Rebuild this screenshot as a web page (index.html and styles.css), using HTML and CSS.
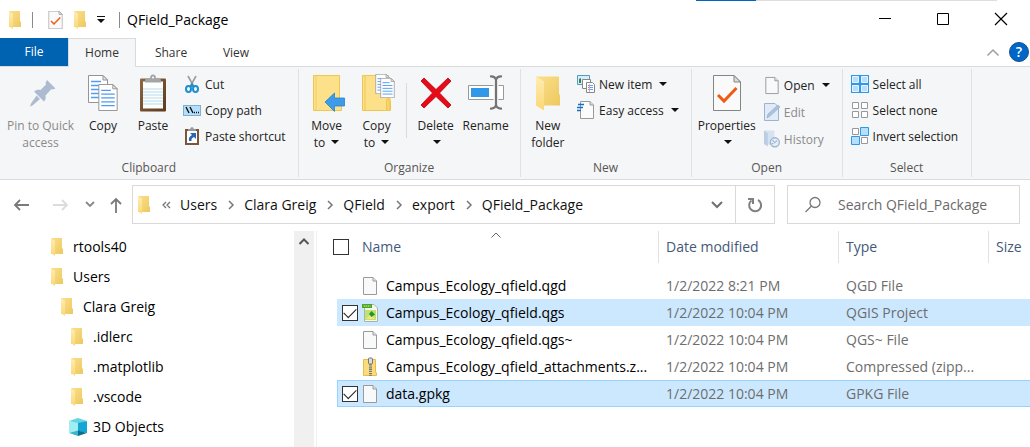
FILE: index.html
```html
<!DOCTYPE html>
<html lang="en">
<head>
<meta charset="utf-8">
<title>QField_Package</title>
<link rel="stylesheet" href="styles.css">
</head>
<body>
<svg class="defs" aria-hidden="true">
  <defs>
    <linearGradient id="fold" x1="0" y1="0" x2="1" y2="1"><stop offset="0" stop-color="#fae08d"/><stop offset="1" stop-color="#eec85e"/></linearGradient>
    <linearGradient id="flap" x1="0" y1="0" x2="0" y2="1"><stop offset="0" stop-color="#ffedb3"/><stop offset="1" stop-color="#fbd775"/></linearGradient>
    <linearGradient id="wood" x1="0" y1="0" x2="1" y2="1"><stop offset="0" stop-color="#8e6845"/><stop offset="1" stop-color="#5c3a1c"/></linearGradient>
    <symbol id="folder" viewBox="0 0 12 18"><path d="M0 0H11V10L12 11V16H0Z" fill="url(#fold)"/><path d="M0 0L4 3V18L0 15Z" fill="url(#flap)"/></symbol>
    <symbol id="file" viewBox="0 0 16 20"><path d="M1.500 1.500H11L14.500 5V18.500H1.500Z" fill="#f8f9f9" stroke="#9a9a9a"/><path d="M11 1.500V5H14.500" fill="#e4e4e4" stroke="#9a9a9a"/></symbol>
    <symbol id="sheet" viewBox="0 0 20 28"><path d="M.5.5H15L19.500 5V27.500H.5Z" fill="#fff" stroke="#949494"/><path d="M15 .5V5H19.500Z" fill="#e8e8e8" stroke="#949494"/><path d="M3 6.500H13M3 10.500H17M3 14.500H17M3 18.500H17M3 22.500H17" stroke="#4f9bf5" stroke-width="1.300"/></symbol>
    <symbol id="checked" viewBox="0 0 28 36"><path d="M.5.5H21L27.500 7V35.500H.5Z" fill="#fafafa" stroke="#858585"/><path d="M21 .5V7H27.500Z" fill="#ddd" stroke="#858585"/><path d="M5 20L11 26L23.500 13" fill="none" stroke="#f05a14" stroke-width="3"/></symbol>
    <symbol id="chev" viewBox="0 0 8 10"><path d="M2 1L6 5L2 9" fill="none" stroke="#777" stroke-width="1.500"/></symbol>
  </defs>
</svg>

<header class="titlebar">
  <div class="accent"></div>
  <div class="quick">
    <svg class="i-folder"><use href="#folder"/></svg>
    <span class="bar first"></span>
    <button aria-label="Properties"><svg width="15" height="18"><use href="#checked"/></svg></button>
    <button aria-label="New folder"><svg class="i-folder"><use href="#folder"/></svg></button>
    <button aria-label="Customize toolbar"><svg width="8" height="8" viewBox="0 0 8 8"><path d="M0 .5H8" stroke="#111"/><path d="M0 3H8L4 7Z" fill="#111"/></svg></button>
    <span class="bar last"></span>
    <h1>QField_Package</h1>
  </div>
  <div class="winctl">
    <button aria-label="Minimize"><svg width="14" height="14"><path d="M1 6.500H13" stroke="#000"/></svg></button>
    <button aria-label="Maximize"><svg width="14" height="14"><path d="M1.500 1.500H12.500V12.500H1.500Z" fill="none" stroke="#000"/></svg></button>
    <button aria-label="Close"><svg width="14" height="14"><path d="M1 1L13 13M13 1L1 13" stroke="#000" stroke-width="1.200"/></svg></button>
  </div>
</header>

<nav class="tabs">
  <button class="tab file">File</button>
  <button class="tab active">Home</button>
  <button class="tab share">Share</button>
  <button class="tab view">View</button>
  <div class="tabs-end">
    <button aria-label="Collapse ribbon"><svg width="14" height="9"><path d="M1.500 7.500L7 2L12.500 7.500" fill="none" stroke="#a0a0a0" stroke-width="1.500"/></svg></button>
    <button class="help" aria-label="Help">?</button>
  </div>
</nav>

<section class="ribbon">
  <div class="group">
    <div class="tools">
      <button class="big wide off"><svg width="36" height="36" viewBox="0 0 36 36"><g fill="#adbbd1"><path d="M24 5L32.500 13.500L29.500 14.500L28.500 14L22.500 20.500C23 23 22.500 25 21 26.500L11 16.500C13 15 15 14.500 17.500 15L23 9.500L22.500 8Z"/><path d="M13.500 20.500L17 24L9.500 30.500L7 31.500L8 28.500Z"/></g></svg><span>Pin to Quick<br>access</span></button>
      <button class="big"><svg width="32" height="36" viewBox="0 0 32 36"><use href="#sheet" x="1" y="0" width="20" height="28"/><use href="#sheet" x="11" y="9" width="20" height="27"/></svg><span>Copy</span></button>
      <button class="big"><svg width="28" height="37" viewBox="0 0 28 37"><rect x="1" y="4" width="26" height="33" rx="1" fill="url(#wood)"/><rect x="4" y="7" width="20" height="27" fill="#fdfefe"/><path d="M4 14.500H24M4 17.500H24M4 20.500H24M4 23.500H24M4 26.500H24M4 29.500H24" stroke="#b6dcf0"/><path d="M6 8V6Q6 4 9 4H11Q11 0 14 0Q17 0 17 4H19Q22 4 22 6V8Z" fill="#a3a5a8"/><circle cx="14" cy="3" r="1" fill="#fff"/></svg><span>Paste</span></button>
      <div class="stack">
        <button class="small"><svg width="18" height="18" viewBox="0 0 18 18"><path d="M5 1L10.500 11M13 1L7.500 11" stroke="#9a9ea3" stroke-width="1.600"/><g fill="none" stroke="#1c8fd1" stroke-width="2"><ellipse cx="5.500" cy="14" rx="2.500" ry="3"/><ellipse cx="12.500" cy="14" rx="2.500" ry="3"/><path d="M7.500 12L9 9.500L10.500 12"/></g></svg>Cut</button>
        <button class="small"><svg width="18" height="18" viewBox="0 0 18 18"><rect x=".5" y="4.500" width="17" height="10" fill="#b5defb" stroke="#7cb0d5"/><path d="M3 6L6 12M7 6L10 12" stroke="#111" stroke-width="1.400"/><path d="M11 11.500H12M13 11.500H14M15 11.500H16" stroke="#111" stroke-width="1.300"/></svg>Copy path</button>
        <button class="small"><svg width="18" height="20" viewBox="0 0 18 20"><rect x="2" y="3" width="14" height="16" fill="#7a5737"/><rect x="4" y="5" width="10" height="12" fill="#fff"/><path d="M5 5V3H7Q9-1 11 3H13V5Z" fill="#999"/><path d="M7 7H13V13L11 11Q8 12 8.500 15H6Q5 11 9 9Z" fill="#2668b5"/></svg>Paste shortcut</button>
      </div>
    </div>
    <div class="caption">Clipboard</div>
  </div>
  <div class="group organize">
    <div class="tools">
      <button class="big"><svg width="36" height="38" viewBox="0 0 36 38"><path d="M4.500 1.500H30.500V30L32.500 33V36.500H4.500Z" fill="#fde08a" stroke="#edc751"/><path d="M7 2V36" stroke="#edc751" stroke-width=".7"/><path d="M16 28L25.500 19V24H35.500V32H25.500V37.500Z" fill="#3d9be8" stroke="#2684cf" stroke-width=".8"/></svg><span>Move<br>to <i class="caret"></i></span></button>
      <button class="big"><svg width="36" height="38" viewBox="0 0 36 38"><path d="M3.500 1.500H29.500V23Q32 23 31.500 36.500H3.500Z" fill="#fde08a" stroke="#edc751"/><path d="M6 2V36M27.500 36V26Q29 22 31 26V36" fill="#fbd266" stroke="#edc751"/><use href="#sheet" x="16" y="0" width="15" height="20"/><use href="#sheet" x="21" y="4" width="15" height="20"/></svg><span>Copy<br>to <i class="caret"></i></span></button>
      <span class="divider"></span>
      <button class="big"><svg width="34" height="36" viewBox="0 0 34 36"><path d="M5 3L17 14.500L29 3L32 6L20.500 18L32 30L29 33L17 21.500L5 33L2 30L13.500 18L2 6Z" fill="#e60b17" stroke="#b8000c" stroke-width=".8"/></svg><span>Delete<br><i class="caret"></i></span></button>
      <button class="big"><svg width="38" height="36" viewBox="0 0 38 36"><path d="M1.500 10.500H36.500V24.500H1.500Z" fill="#fff" stroke="#999"/><rect x="4" y="13" width="18" height="9" fill="#3198e8"/><path d="M29 4V31" stroke="#f5f6f7" stroke-width="5"/><path d="M29 4V31M23 1.500Q28 1 29 5Q30 1 35 1.500M23 33.500Q28 34 29 30Q30 34 35 33.500" fill="none" stroke="#747474" stroke-width="2.200"/></svg><span>Rename</span></button>
    </div>
    <div class="caption">Organize</div>
  </div>
  <div class="group new">
    <div class="tools">
      <button class="big"><svg width="24" height="35" viewBox="0 0 24 35"><path d="M0 1H23V18L24 20V30H0Z" fill="url(#fold)"/><path d="M0 1L8 6V35L0 30Z" fill="url(#flap)"/></svg><span>New<br>folder</span></button>
      <div class="stack">
        <button class="small"><svg width="18" height="18" viewBox="0 0 18 18"><path d="M.5.5H12.500V9.500H.5Z" fill="#d6edfa" stroke="#579abf"/><path d="M2 8V4L4 3V8Z" fill="#368052"/><path d="M5.500 4.500H13.500V13.500H5.500Z" fill="#fff" stroke="#888"/><path d="M9.500 7.500H15.500L17.500 9.500V17.500H9.500Z" fill="#fff" stroke="#888"/><path d="M11 10.500H16M11 12.500H16M11 14.500H16" stroke="#5ca2f5"/><path d="M12.500 9V17" stroke="#f39a9a"/></svg>New item <i class="caret"></i></button>
        <button class="small"><svg width="18" height="18" viewBox="0 0 18 18"><path d="M3.500.5H13L16.500 4V17.500H3.500Z" fill="#fcfcfc" stroke="#999"/><path d="M13 .5V4H16.500" fill="#ddd" stroke="#999"/><path d="M1 3.500H7M0 6.500H6M0 9.500H4" stroke="#1670c0" stroke-width="1.500"/></svg>Easy access <i class="caret"></i></button>
      </div>
    </div>
    <div class="caption">New</div>
  </div>
  <div class="group open">
    <div class="tools">
      <button class="big prop"><svg width="28" height="36"><use href="#checked"/></svg><span>Properties<br><i class="caret"></i></span></button>
      <div class="stack">
        <button class="small"><svg width="16" height="19"><use href="#file"/></svg>Open <i class="caret"></i></button>
        <button class="small off"><svg width="16" height="18" viewBox="0 0 16 18"><path d="M.5.5H11L14.500 4V17.500H.5Z" fill="#dfebf7" stroke="#9db3cf"/><path d="M3 15L4 11L14 2L16 4L6 13Z" fill="#adc2dc" stroke="#8ea8c8" stroke-width=".6"/></svg>Edit</button>
        <button class="small off"><svg width="16" height="18" viewBox="0 0 17 18"><path d="M0 0H11V15H0Z" fill="#d5e2f0"/><path d="M0 0L4 3V17L0 14Z" fill="#bccde1"/><circle cx="11.500" cy="12.500" r="4.800" fill="#e5edf7" stroke="#9db4d0" stroke-width="1.400"/><path d="M9 10L11.500 13L14 10.500M8 14H10" stroke="#7f9bbd" fill="none"/></svg>History</button>
      </div>
    </div>
    <div class="caption">Open</div>
  </div>
  <div class="group select">
    <div class="tools">
      <div class="stack">
        <button class="small"><svg width="18" height="18" viewBox="0 0 18 18"><rect width="18" height="18" fill="#3297e8"/><path d="M1.500 1.500H7.500V7.500H1.500ZM10.500 1.500H16.500V7.500H10.500ZM1.500 10.500H7.500V16.500H1.500ZM10.500 10.500H16.500V16.500H10.500Z" fill="#b6dffc" stroke="#e7f5ff"/></svg>Select all</button>
        <button class="small"><svg width="18" height="18" viewBox="0 0 18 18"><path d="M1.500 1.500H7.500V7.500H1.500ZM10.500 1.500H16.500V7.500H10.500ZM1.500 10.500H7.500V16.500H1.500ZM10.500 10.500H16.500V16.500H10.500Z" fill="#fff" stroke="#999"/></svg>Select none</button>
        <button class="small"><svg width="18" height="18" viewBox="0 0 18 18"><path d="M1.500 1.500H7.500V7.500H1.500ZM10.500 10.500H16.500V16.500H10.500Z" fill="#fff" stroke="#999"/><path d="M9.500.5H17.500V8.500H9.500ZM.5 9.500H8.500V17.500H.5Z" fill="#b6dffc" stroke="#3297e8"/></svg>Invert selection</button>
      </div>
    </div>
    <div class="caption">Select</div>
  </div>
</section>

<div class="address">
  <div class="history">
    <button aria-label="Back"><svg width="18" height="14"><path d="M8 2L3 7L8 12M3 7H17" fill="none" stroke="#7a7a7a" stroke-width="1.800"/></svg></button>
    <button aria-label="Forward"><svg width="18" height="14"><path d="M10 2L15 7L10 12M1 7H15" fill="none" stroke="#dcdcdc" stroke-width="1.800"/></svg></button>
    <button aria-label="Recent locations"><svg width="10" height="7"><path d="M1 1L5 5L9 1" fill="none" stroke="#888" stroke-width="1.800"/></svg></button>
    <button aria-label="Up"><svg width="12" height="18"><path d="M1 8L6 3L11 8M6 3V17" fill="none" stroke="#7a7a7a" stroke-width="1.800"/></svg></button>
  </div>
  <div class="path">
    <svg class="i-folder"><use href="#folder"/></svg>
    <svg class="more" width="9" height="8"><path d="M4 1L1 4L4 7M8 1L5 4L8 7" fill="none" stroke="#777" stroke-width="1.300"/></svg>
    <button>Users</button><svg class="sep"><use href="#chev"/></svg>
    <button>Clara Greig</button><svg class="sep"><use href="#chev"/></svg>
    <button>QField</button><svg class="sep"><use href="#chev"/></svg>
    <button>export</button><svg class="sep"><use href="#chev"/></svg>
    <button>QField_Package</button>
    <button class="drop" aria-label="Previous locations"><svg width="12" height="8"><path d="M1 1L6 6L11 1" fill="none" stroke="#707070" stroke-width="2"/></svg></button>
    <button class="refresh" aria-label="Refresh"><svg width="16" height="18"><path d="M11 4A6 6 0 1 1 4.500 4.500" fill="none" stroke="#808080" stroke-width="2"/><path d="M1 3H6V8" fill="none" stroke="#808080" stroke-width="2"/></svg></button>
  </div>
  <label class="search">
    <svg width="18" height="18"><circle cx="11" cy="6.500" r="5" fill="none" stroke="#777" stroke-width="1.300"/><path d="M7.500 10L1.500 16" stroke="#777" stroke-width="1.300"/></svg>
    <input type="text" placeholder="Search QField_Package" aria-label="Search QField_Package">
  </label>
</div>

<main class="content">
  <nav class="tree">
    <a href="#" class="l1"><svg class="i-folder"><use href="#folder"/></svg>rtools40</a>
    <a href="#" class="l1"><svg class="i-folder"><use href="#folder"/></svg>Users</a>
    <a href="#" class="l2"><svg class="i-folder"><use href="#folder"/></svg>Clara Greig</a>
    <a href="#" class="l3"><svg class="i-folder"><use href="#folder"/></svg>.idlerc</a>
    <a href="#" class="l3"><svg class="i-folder"><use href="#folder"/></svg>.matplotlib</a>
    <a href="#" class="l3"><svg class="i-folder"><use href="#folder"/></svg>.vscode</a>
    <a href="#" class="cube"><svg width="18" height="18" viewBox="0 0 18 18"><path d="M0 3L9 0L18 3L9 6Z" fill="#62d4e2"/><path d="M0 3L9 5V13L0 15Z" fill="#a0eef1"/><path d="M18 3L9 5V13L18 15Z" fill="#14a5d5"/><path d="M0 15L9 12.500V18Z" fill="#35b9ca"/><path d="M18 15L9 12.500V18Z" fill="#08718b"/></svg>3D Objects</a>
  </nav>
  <div class="scroll"><button aria-label="Scroll up"><svg width="12" height="9"><path d="M1.500 7L6 2.500L10.500 7" fill="none" stroke="#555" stroke-width="2"/></svg></button></div>
  <div class="files">
    <svg class="sort" width="10" height="6"><path d="M.5 5.500L5 1L9.500 5.500" fill="none" stroke="#666"/></svg>
    <table>
      <colgroup><col class="c-check"><col class="c-name"><col class="c-date"><col class="c-type"><col></colgroup>
      <thead><tr><th class="check"><input type="checkbox" aria-label="Select all items"></th><th class="name">Name</th><th>Date modified</th><th>Type</th><th class="size">Size</th></tr></thead>
      <tbody>
        <tr><td class="check"></td><td class="name"><span><svg class="i-file"><use href="#file"/></svg>Campus_Ecology_qfield.qgd</span></td><td>1/2/2022 8:21 PM</td><td>QGD File</td><td></td></tr>
        <tr class="sel"><td class="check"><input type="checkbox" checked aria-label="Campus_Ecology_qfield.qgs"></td><td class="name"><span><svg class="i-file" viewBox="0 0 16 20"><path d="M2.500 1.500H12L15.500 5V18.500H2.500Z" fill="#f4f8ea" stroke="#a8b5a8"/><path d="M0 1H10V5H0Z" fill="#4ca523"/><path d="M1.500 3H8.500" stroke="#d8efb8" stroke-dasharray="1.500 .6"/><path d="M3 7H14V17H3Z" fill="#c0e174"/><path d="M4 16L9 11L13 16Z" fill="#f1e879"/><path d="M9.500 8L13 11.500L9.500 14L7 11Z" fill="#24942e"/></svg>Campus_Ecology_qfield.qgs</span></td><td>1/2/2022 10:04 PM</td><td>QGIS Project</td><td></td></tr>
        <tr><td class="check"></td><td class="name"><span><svg class="i-file"><use href="#file"/></svg>Campus_Ecology_qfield.qgs~</span></td><td>1/2/2022 10:04 PM</td><td>QGS~ File</td><td></td></tr>
        <tr><td class="check"></td><td class="name"><span><svg class="i-file" viewBox="0 0 16 20"><path d="M1.500 2.500H13.500V15L14.500 16V18.500H1.500Z" fill="#fbdc7d" stroke="#e6bd48"/><path d="M8.500 5V19" stroke="#777" stroke-width="3" stroke-dasharray="1.300 .9"/><rect x="6.500" y="1" width="4" height="6" rx="1" fill="#ddd" stroke="#777"/></svg>Campus_Ecology_qfield_attachments.z...</span></td><td>1/2/2022 10:04 PM</td><td>Compressed (zipp...</td><td></td></tr>
        <tr class="sel focus"><td class="check"><input type="checkbox" checked aria-label="data.gpkg"></td><td class="name"><span><svg class="i-file"><use href="#file"/></svg>data.gpkg</span></td><td>1/2/2022 10:04 PM</td><td>GPKG File</td><td></td></tr>
      </tbody>
    </table>
  </div>
</main>
</body>
</html>
```
FILE: styles.css
```css
* { box-sizing: border-box; }
html, body { height: 100%; }
body { margin: 0; display: flex; flex-direction: column; overflow: hidden; background: #fff; color: #000; font: 14px/20px "Open Sans", "Noto Sans", sans-serif; }
button { display: flex; align-items: center; border: 0; padding: 0; background: none; color: inherit; font: inherit; white-space: nowrap; }
svg { flex: none; display: block; }
.defs { position: absolute; width: 0; height: 0; }
.i-folder { width: 12px; height: 18px; }

.titlebar { position: relative; display: flex; justify-content: space-between; height: 38px; flex: none; }
.accent { position: absolute; top: 0; right: 33px; width: 301px; height: 1px; background: linear-gradient(90deg, #0067c0 60px, #dedede 60px); }
.quick { display: flex; align-items: center; gap: 11px; padding: 2px 0 0 9px; }
.quick h1 { margin: 0 0 0 -4px; font-size: 14px; font-weight: 400; }
.bar { width: 1px; height: 16px; background: #8a8a8a; }
.bar.first { margin-right: 4px; }
.bar.last { margin-left: 3px; }
.winctl { display: flex; }
.winctl button { width: 58px; justify-content: center; }

.tabs { display: flex; height: 29px; flex: none; border-bottom: 1px solid #dadbdc; font-size: 12px; color: #333; }
.tab { justify-content: center; height: 29px; width: 68px; }
.tab.file { height: 28px; background: #0063b1; color: #fff; }
.tab.active { background: #f5f6f7; border: 1px solid #dadbdc; border-bottom: 0; }
.tab.share { width: 70px; }
.tab.view { width: 60px; }
.tabs-end { display: flex; align-items: center; gap: 9px; margin-left: auto; padding-right: 1px; }
.help { width: 20px; height: 20px; justify-content: center; border-radius: 50%; background: #0067c8; border: 1px solid #1d4e89; color: #fff; font-size: 14px; font-weight: 600; }

.ribbon { display: flex; flex: none; padding: 2px 0; background: #f5f6f7; border-bottom: 1px solid #dadbdc; font-size: 12px; line-height: 17px; color: #222; }
.group { display: flex; flex-direction: column; flex: none; border-right: 1px solid #e0e1e2; padding: 0 3px; }
.tools { display: flex; height: 90px; padding-top: 4px; }
.caption { text-align: center; height: 18px; line-height: 18px; color: #555; }
.big { flex-direction: column; justify-content: flex-start; gap: 5px; width: 50px; padding-top: 1px; }
.big svg { height: 38px; }
.big.wide { width: 75px; }
.stack { display: flex; flex-direction: column; padding: 0 9px 0 5px; }
.small { height: 26px; gap: 4px; padding-bottom: 4px; }
.off { color: #8a8a8a; }
.caret { display: inline-block; border: 4px solid transparent; border-top-color: #111; border-bottom: 0; margin-left: 3px; vertical-align: 3px; }
.divider { width: 1px; height: 55px; margin: 10px 4px 0; background: #dadbdc; }
.organize { width: 222px; }
.new { width: 171px; }
.open { width: 151px; }
.open .small { height: 27px; padding-bottom: 3px; }
.select { width: 129px; }
.prop { width: 70px; }

.address { display: flex; flex: none; height: 51px; padding: 5px 10px 7px 12px; gap: 12px; color: #111; }
.history { display: flex; align-items: center; gap: 15px; width: 108px; }
.history button:first-child { margin-right: 7px; }
.path { display: flex; flex: 1; align-items: center; border: 1px solid #d9d9d9; padding-left: 5px; }
.path .more { margin: 0 9px 0 12px; }
.path .sep { width: 8px; height: 10px; margin: 0 9px 0 10px; }
.path .drop { margin-left: auto; padding: 0 12px; }
.refresh { width: 39px; height: 100%; justify-content: center; border-left: 1px solid #d9d9d9; }
.search { display: flex; align-items: center; width: 233px; border: 1px solid #d9d9d9; padding-left: 16px; gap: 16px; }
.search input { flex: 1; min-width: 0; border: 0; padding: 0; outline: 0; background: none; font: inherit; }
.search input::placeholder { color: #6b6b6b; opacity: 1; }

.content { display: flex; flex: 1; min-height: 0; }
.tree { display: flex; flex-direction: column; width: 294px; padding-top: 1px; overflow: hidden; }
.tree a { display: flex; flex: none; align-items: center; gap: 10px; height: 30px; color: #000; text-decoration: none; }
.l1 { padding-left: 51px; }
.l2 { padding-left: 61px; }
.l3 { padding-left: 71px; }
.tree .cube { padding-left: 69px; gap: 6px; }
.scroll { width: 20px; background: #f0f0f0; }
.scroll button { width: 100%; height: 20px; justify-content: center; }
.files { position: relative; flex: 1; min-width: 0; margin-left: 2px; border-left: 1px solid #f0f0f0; padding-left: 11px; }
.sort { position: absolute; left: 174px; top: 1px; }
table { width: 100%; table-layout: fixed; border-collapse: separate; border-spacing: 0; }
.c-check { width: 34px; }
.c-name { width: 297px; }
.c-date { width: 180px; }
.c-type { width: 150px; }
th, td { padding: 0 0 0 7px; text-align: left; font-weight: 400; white-space: nowrap; }
th { height: 32px; color: #44597a; border-right: 1px solid #e2e2e2; }
th.check, th:last-child { border-right: 0; }
th.name, td.name { padding-left: 0; }
thead::after { content: ""; display: block; height: 9px; }
td { height: 27px; color: #6d6d6d; }
td.name { color: #000; }
td.name span { display: flex; align-items: center; gap: 8px; }
.i-file { width: 16px; height: 20px; }
th.check { padding-left: 5px; }
td.check { padding-left: 5px; border-left: 9px solid transparent; background-clip: padding-box; }
.sel td { background-color: #cce8ff; }
.focus td { box-shadow: inset 0 1px #99d1ff, inset 0 -1px #99d1ff; }
.focus td.check { box-shadow: inset 0 1px #99d1ff, inset 0 -1px #99d1ff, inset 1px 0 #99d1ff; }
input[type="checkbox"] { display: block; appearance: none; width: 16px; height: 16px; margin: 0; border: 1px solid #333; background: #fff; }
input[type="checkbox"]:checked::after { content: ""; display: block; width: 11px; height: 6px; margin: 2px 1px; border: solid #222; border-width: 0 0 1px 1px; transform: rotate(-45deg); }
```
